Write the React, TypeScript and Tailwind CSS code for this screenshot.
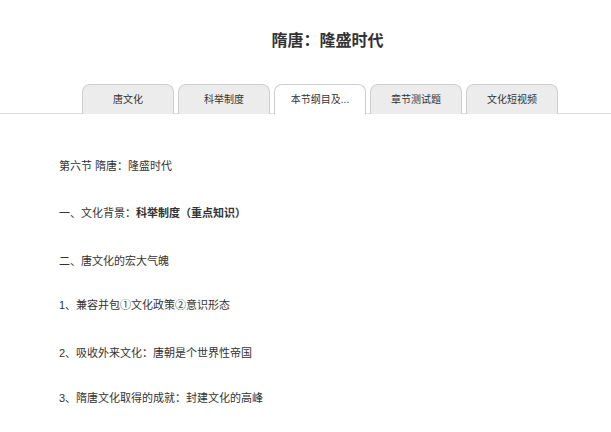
const tabs = ["唐文化", "科举制度", "本节纲目及...", "章节测试题", "文化短视频"];

export default function App() {
  return (
    <div className="w-[611px] h-[432px] bg-white text-[#333] overflow-hidden" style={{ fontFamily: '"Liberation Sans", "Noto Sans CJK SC", sans-serif' }}>
      <h1 className="pt-[31px] h-[84px] text-center text-[16px] font-bold leading-[20px] pl-[44px]">隋唐：隆盛时代</h1>
      <div className="flex gap-[4px] pl-[82px] border-b border-[#dcdcdc] h-[30px]">
        {tabs.map((t, i) => (
          <div
            key={t}
            className={
              "w-[92px] h-[30px] rounded-t-[8px] border border-[#cfcfcf] flex items-center justify-center text-[10px] " +
              (i === 2 ? "bg-white border-b-white relative z-10 h-[31px]" : "bg-[#ececec] border-b-0")
            }
          >
            {t}
          </div>
        ))}
      </div>
      <div className="pl-[59px] pt-[44px] text-[11px] leading-[16px] flex flex-col">
        <p className="h-[47px]">第六节 隋唐：隆盛时代</p>
        <p className="h-[48px]">一、文化背景：<b>科举制度（重点知识）</b></p>
        <p className="h-[44px]">二、唐文化的宏大气魄</p>
        <p className="h-[48px]">1、兼容并包①文化政策②意识形态</p>
        <p className="h-[45px]">2、吸收外来文化：唐朝是个世界性帝国</p>
        <p>3、隋唐文化取得的成就：封建文化的高峰</p>
      </div>
    </div>
  );
}
